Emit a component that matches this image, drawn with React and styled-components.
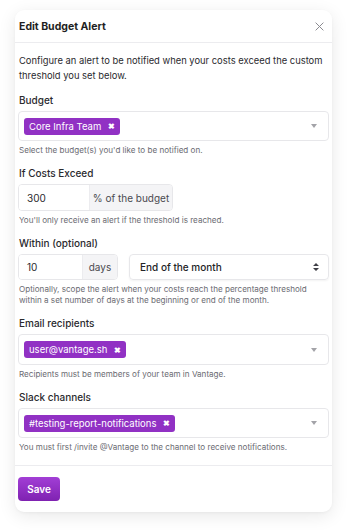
import React from 'react';
import styled, { createGlobalStyle } from 'styled-components';

const GlobalStyle = createGlobalStyle`
  * { box-sizing: border-box; }
  body {
    margin: 0;
    background: #ffffff;
    font-family: Inter, "Noto Sans", sans-serif;
    color: #27272a;
  }
`;

const Page = styled.div`
  width: 347px;
  height: 530px;
  padding: 10px 15px 20px;
`;

const Card = styled.div`
  width: 317px;
  background: #fff;
  border-radius: 9px;
  box-shadow: 0 4px 18px rgba(0, 0, 0, 0.09), 0 1px 3px rgba(0, 0, 0, 0.04);
  overflow: hidden;
`;

const Header = styled.div`
  height: 33px;
  display: flex;
  align-items: center;
  justify-content: space-between;
  padding: 0 5px 0 4px;
  border-bottom: 1px solid #ececef;
`;

const Title = styled.h2`
  margin: 0;
  font-size: 10.5px;
  font-weight: 700;
  color: #1f1f23;
`;

const CloseButton = styled.button`
  width: 16px;
  height: 16px;
  border: none;
  background: none;
  padding: 0;
  display: flex;
  align-items: center;
  justify-content: center;
  color: #8a8a90;
  cursor: pointer;
`;

const Body = styled.div`
  padding: 10px 3px 12px;
  border-bottom: 1px solid #ececef;
`;

const Intro = styled.p`
  margin: 0 0 10px 1px;
  font-size: 9.4px;
  line-height: 15px;
  color: #2a2a2e;
`;

const Field = styled.div`
  margin-bottom: ${p => (p.last ? '0' : '10px')};
`;

const Label = styled.div`
  font-size: 10px;
  line-height: 14px;
  font-weight: 500;
  color: #2a2a2e;
  margin: 0 0 4px 1px;
`;

const Help = styled.div`
  margin: 4px 0 0 1px;
  font-size: 8.1px;
  line-height: 11px;
  color: #6b6b72;
`;

const MultiSelect = styled.div`
  height: ${p => p.h || 30}px;
  border: 1px solid #e7e7ea;
  border-radius: 4px;
  display: flex;
  align-items: center;
  justify-content: space-between;
  padding: 0 11px 0 5px;
  background: #fff;
`;

const Chip = styled.span`
  display: inline-flex;
  align-items: center;
  gap: 7px;
  height: 17px;
  padding: 0 5px;
  border-radius: 3px;
  background: #9131c4;
  color: #fff;
  font-size: 9.5px;
  font-weight: 400;
`;

const ChipX = styled.span`
  font-size: 8px;
  font-weight: 700;
  line-height: 1;
`;

const Caret = styled.span`
  width: 0;
  height: 0;
  border-left: 3.5px solid transparent;
  border-right: 3.5px solid transparent;
  border-top: 4px solid #a3a3a8;
`;

const Row = styled.div`
  display: flex;
  gap: 11px;
`;

const InputGroup = styled.div`
  display: flex;
  height: ${p => p.h || 27}px;
  width: ${p => p.w}px;
  border: 1px solid #e7e7ea;
  border-radius: 4px;
  overflow: hidden;
`;

const Input = styled.div`
  width: ${p => p.w}px;
  display: flex;
  align-items: center;
  padding-left: 8px;
  font-size: 10px;
  color: #2a2a2e;
  background: #fff;
`;

const Addon = styled.div`
  flex: 1;
  display: flex;
  align-items: center;
  justify-content: center;
  border-left: 1px solid #ececef;
  background: #f4f4f6;
  color: #4a4a50;
  font-size: 10px;
`;

const NativeSelect = styled.div`
  flex: 1;
  height: 26px;
  border: 1px solid #e7e7ea;
  border-radius: 4px;
  box-shadow: 0 1px 2px rgba(0, 0, 0, 0.05);
  display: flex;
  align-items: center;
  justify-content: space-between;
  padding: 0 9px 0 10px;
  font-size: 10px;
  font-weight: 500;
  color: #232327;
`;

const Footer = styled.div`
  padding: 11px 3px 11px;
`;

const SaveButton = styled.button`
  height: 24px;
  width: 42px;
  border: none;
  border-radius: 4px;
  background: linear-gradient(180deg, #a23ed6 0%, #7f22b1 100%);
  color: #fff;
  font-family: Inter, "Noto Sans", sans-serif;
  font-size: 10px;
  font-weight: 600;
  cursor: pointer;
`;

const SortIcon = () => (
  <svg width="6" height="8" viewBox="0 0 6 8">
    <path d="M3 0L6 3H0z M3 8L0 5h6z" fill="#3f3f46" />
  </svg>
);

const CloseIcon = () => (
  <svg width="9" height="9" viewBox="0 0 10 10">
    <path d="M1 1L9 9M9 1L1 9" stroke="currentColor" strokeWidth="1.1" strokeLinecap="round" />
  </svg>
);

const TagSelect = ({ tag, h }) => (
  <MultiSelect h={h}>
    <Chip>
      {tag}
      <ChipX>✖</ChipX>
    </Chip>
    <Caret />
  </MultiSelect>
);

export default function App() {
  return (
    <Page>
      <GlobalStyle />
      <Card>
        <Header>
          <Title>Edit Budget Alert</Title>
          <CloseButton>
            <CloseIcon />
          </CloseButton>
        </Header>
        <Body>
          <Intro>
            Configure an alert to be notified when your costs exceed the custom threshold you set below.
          </Intro>

          <Field>
            <Label>Budget</Label>
            <TagSelect tag="Core Infra Team" />
            <Help>Select the budget(s) you'd like to be notified on.</Help>
          </Field>

          <Field>
            <Label>If Costs Exceed</Label>
            <InputGroup w={155}>
              <Input w={70}>300</Input>
              <Addon>% of the budget</Addon>
            </InputGroup>
            <Help>You'll only receive an alert if the threshold is reached.</Help>
          </Field>

          <Field>
            <Label>Within (optional)</Label>
            <Row>
              <InputGroup w={100} h={26}>
                <Input w={63}>10</Input>
                <Addon>days</Addon>
              </InputGroup>
              <NativeSelect>
                End of the month
                <SortIcon />
              </NativeSelect>
            </Row>
            <Help>
              Optionally, scope the alert when your costs reach the percentage threshold within a set
              number of days at the beginning or end of the month.
            </Help>
          </Field>

          <Field>
            <Label>Email recipients</Label>
            <TagSelect tag="user@vantage.sh" h={31} />
            <Help>Recipients must be members of your team in Vantage.</Help>
          </Field>

          <Field last>
            <Label>Slack channels</Label>
            <TagSelect tag="#testing-report-notifications" />
            <Help>You must first /invite @Vantage to the channel to receive notifications.</Help>
          </Field>
        </Body>
        <Footer>
          <SaveButton>Save</SaveButton>
        </Footer>
      </Card>
    </Page>
  );
}
